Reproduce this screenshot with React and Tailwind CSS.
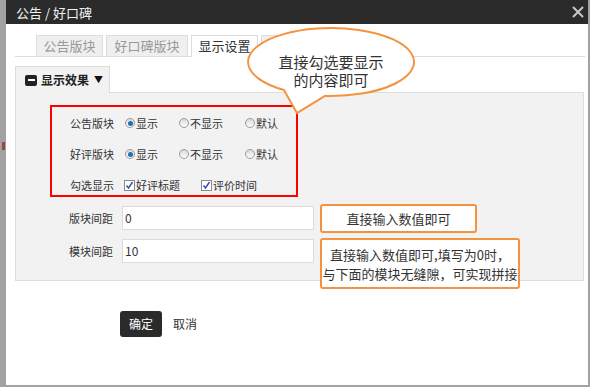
import React from 'react';

const Radio = ({ checked, label }) => (
  <span className="flex items-center">
    <span className="relative w-[10px] h-[10px] rounded-full border border-[#9a9a9a] bg-gradient-to-b from-[#d8d8d8] to-[#ffffff] flex items-center justify-center">
      {checked && <span className="w-[5px] h-[5px] rounded-full bg-[#1f6fb8]" />}
    </span>
    <span className="ml-px">{label}</span>
  </span>
);

const Check = ({ label }) => (
  <span className="flex items-center">
    <span className="w-[11px] h-[11px] border border-[#8a8a8a] bg-white flex items-center justify-center">
      <svg width="9" height="9" viewBox="0 0 9 9">
        <path d="M1.5 4.5 L3.5 7 L7.5 1" fill="none" stroke="#2a4fb0" strokeWidth="1.4" />
      </svg>
    </span>
    <span className="ml-px">{label}</span>
  </span>
);

const RadioRow = ({ label }) => (
  <div className="flex items-center h-[14px]">
    <span className="w-[55px]">{label}</span>
    <span className="w-[54px]"><Radio checked label="显示" /></span>
    <span className="w-[66px]"><Radio label="不显示" /></span>
    <Radio label="默认" />
  </div>
);

const InputRow = ({ label, value }) => (
  <div className="flex items-center">
    <span className="w-[97px] text-right text-[11px]">{label}</span>
    <div className="ml-[9px] w-[192px] h-[24px] border border-[#dcdcdc] bg-white flex items-center pl-[2px] text-[#333]">
      {value}
    </div>
  </div>
);

export default function App() {
  const tabs = [
    { name: '公告版块', w: 'w-[67px]' },
    { name: '好口碑版块', w: 'w-[82px]' },
    { name: '显示设置', w: 'w-[67px]', active: true },
    { name: '', w: 'w-[67px]' },
  ];

  return (
    <div className="relative w-[590px] h-[387px] flex bg-white overflow-hidden text-[12px] text-[#333] font-['Noto_Sans_CJK_SC','Noto_Sans',sans-serif]">
      {/* left frame */}
      <div className="w-[6px] bg-[#a2a2a2]" />
      <div className="absolute left-[2px] top-[142px] w-[3px] h-[8px] bg-[#9b4848]" />

      <div className="w-[582px] flex flex-col border-b-2 border-[#a2a2a2]">
        {/* Title bar */}
        <div className="h-[24px] bg-[#2b2b2b] flex items-center justify-between pl-[10px] pr-[4px]">
          <span className="text-[13px] text-[#f0f0f0] leading-none">公告 / 好口碑</span>
          <svg width="12" height="12" viewBox="0 0 12 12">
            <path d="M1 1 L11 11 M11 1 L1 11" stroke="#c8c8c8" strokeWidth="2" />
          </svg>
        </div>

        {/* Tabs */}
        <div className="mt-[11px] ml-[9px] mr-[3px] pl-[21px] flex gap-[3px] border-b border-[#dddddd]">
          {tabs.map((t, i) => (
            <div
              key={i}
              className={`${t.w} h-[22px] -mb-px flex items-center justify-center text-[13px] border border-[#dddddd] ${
                t.active ? 'bg-white border-b-white text-[#333]' : 'bg-[#efefef] text-[#999]'
              }`}
            >
              {t.name}
            </div>
          ))}
        </div>

        {/* Panel */}
        <div className="mt-[9px] ml-[9px] mr-[4px]">
          <div className="flex">
            <div className="w-[95px] h-[27px] border border-b-0 border-[#dddddd] bg-[#f2f2f2] flex items-center pl-[9px] font-bold text-[#222]">
              <span className="w-[12px] h-[11px] rounded-[2px] bg-[#222] flex items-center justify-center mr-[4px]">
                <span className="w-[7px] h-[2px] bg-white" />
              </span>
              显示效果
              <span className="ml-[5px] text-[9px] text-[#111]">▼</span>
            </div>
            <div className="flex-1 border-b border-[#dddddd]" />
          </div>
          <div className="h-[188px] border border-t-0 border-[#dddddd] bg-[#f2f2f2] pt-[12px]">
            <div className="ml-[34px] w-[248px] h-[92px] border-2 border-[#ff0000] pl-[18px] pt-[9px] flex flex-col gap-[17px] text-[11px]">
              <RadioRow label="公告版块" />
              <RadioRow label="好评版块" />
              <div className="flex items-center h-[14px]">
                <span className="w-[54px]">勾选显示</span>
                <span className="w-[77px]"><Check label="好评标题" /></span>
                <Check label="评价时间" />
              </div>
            </div>
            <div className="mt-[9px] flex flex-col gap-[9px]">
              <InputRow label="版块间距" value="0" />
              <InputRow label="模块间距" value="10" />
            </div>
          </div>
        </div>

        {/* Buttons */}
        <div className="mt-[30px] ml-[114px] flex items-center">
          <button className="w-[42px] h-[26px] bg-[#2b2b2b] rounded-[3px] text-white text-[12px]">确定</button>
          <span className="ml-[11px]">取消</span>
        </div>
      </div>

      <div className="w-[2px] bg-[#a2a2a2]" />

      {/* Speech bubble annotation */}
      <svg className="absolute left-[244px] top-[25px]" width="176" height="94" viewBox="244 25 176 94">
        <path
          d="M325 95.9 L297 113 L284 90 A83 34 0 1 1 325 95.9 Z"
          fill="#ffffff"
          stroke="#f5923e"
          strokeWidth="2"
        />
      </svg>
      <div className="absolute left-[248px] top-[53px] w-[166px] text-center text-[15px] leading-[18px] text-[#333]">
        直接勾选要显示
        <br />
        的内容即可
      </div>

      {/* Note boxes */}
      <div className="absolute left-[320px] top-[204px] w-[157px] h-[29px] border-2 border-[#f5923e] rounded-[3px] bg-white flex items-center justify-center text-[13px]">
        直接输入数值即可
      </div>
      <div className="absolute left-[320px] top-[238px] w-[200px] h-[51px] border-2 border-[#f5923e] rounded-[3px] bg-white flex flex-col items-center justify-center text-[13px] leading-[19px]">
        <span>直接输入数值即可,填写为0时，</span>
        <span>与下面的模块无缝隙，可实现拼接</span>
      </div>
    </div>
  );
}
